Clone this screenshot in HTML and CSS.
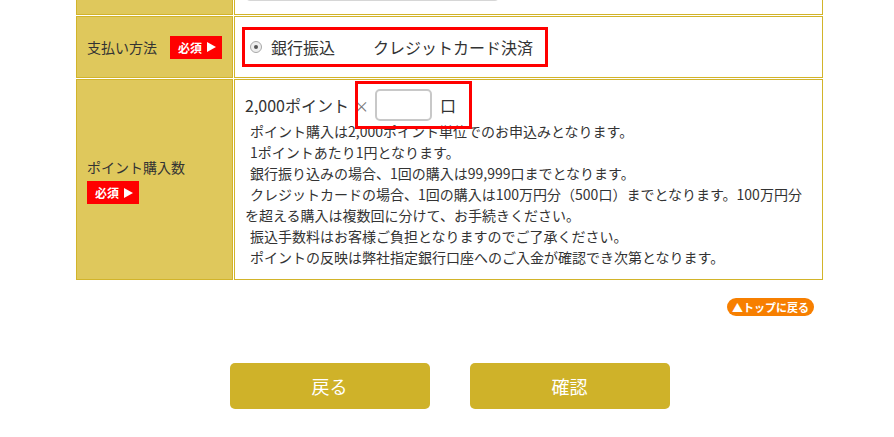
FILE: index.html
```html
<!DOCTYPE html>
<html lang="ja">
<head>
  <meta charset="UTF-8" />
  <meta name="viewport" content="width=device-width, initial-scale=1.0" />
  <title>ポイント購入</title>
  <link rel="stylesheet" href="styles.css">
</head>
<body>
  <div class="wrap">
    <table class="form">
      <tr class="row-top">
        <th></th>
        <td><input type="text" class="text" /></td>
      </tr>
      <tr class="row-pay">
        <th>
          <div class="th-line">
            <span>支払い方法</span>
            <span class="req">必須<i class="tri"></i></span>
          </div>
        </th>
        <td>
          <div class="mark-box">
            <label class="opt"><span class="radio"></span>銀行振込</label>
            <label class="opt">クレジットカード決済</label>
          </div>
        </td>
      </tr>
      <tr class="row-qty">
        <th>
          <div class="th-stack">
            <span>ポイント購入数</span>
            <span class="req">必須<i class="tri"></i></span>
          </div>
        </th>
        <td>
          <div class="qty">
            <span>2,000ポイント</span>
            <span class="times">×</span>
            <span class="qty-input">
              <input type="text" class="num" />
              <span class="unit">口</span>
              <span class="mark"></span>
            </span>
          </div>
          <div class="notes">
            <p>ポイント購入は2,000ポイント単位でのお申込みとなります。</p>
            <p>1ポイントあたり1円となります。</p>
            <p>銀行振り込みの場合、1回の購入は99,999口までとなります。</p>
            <p>クレジットカードの場合、1回の購入は100万円分（500口）までとなります。100万円分<br>を超える購入は複数回に分けて、お手続きください。</p>
            <p>振込手数料はお客様ご負担となりますのでご了承ください。</p>
            <p>ポイントの反映は弊社指定銀行口座へのご入金が確認でき次第となります。</p>
          </div>
        </td>
      </tr>
    </table>

    <div class="pagetop-row">
      <a class="pagetop" href="#">▲トップに戻る</a>
    </div>

    <div class="buttons">
      <button type="button" class="btn">戻る</button>
      <button type="submit" class="btn">確認</button>
    </div>
  </div>
</body>
</html>
```

FILE: styles.css
```css
body { margin: 0; background: #fff; color: #333; font-family: "Noto Sans CJK JP", "Noto Sans", sans-serif; }
.wrap { width: 749px; margin-left: 75px; }

.form { width: 749px; border-collapse: separate; border-spacing: 1px; margin-top: -37px; table-layout: fixed; }
.form th, .form td { border: 1px solid #d2b42a; vertical-align: middle; text-align: left; font-weight: normal; }
.form th { width: 135px; background: #dfc85c; padding: 0 10px; font-size: 14px; line-height: 20px; }
.form td { background: #fff; }

.row-top td { padding: 6px 10px 13px; }
.text { display: block; width: 255px; height: 30px; box-sizing: border-box; border: 1px solid #d6d6d6; border-radius: 5px; margin: 0; }

.th-line { display: flex; justify-content: space-between; align-items: center; }
.th-stack { display: flex; flex-direction: column; align-items: flex-start; gap: 4px; margin-top: 2px; }
.req { display: inline-flex; align-items: center; height: 23px; padding: 0 6px 0 8px; background: #f00; color: #fff; font-size: 12px; font-weight: bold; line-height: 23px; }
.tri { display: inline-block; width: 0; height: 0; margin-left: 5px; border-top: 5px solid transparent; border-bottom: 5px solid transparent; border-left: 9px solid #fff; }

.row-pay td { padding: 10px 7px; }
.mark-box { display: inline-flex; align-items: center; height: 34px; border: 3px solid #f00; padding: 0 12px 0 4px; font-size: 16px; }
.opt { display: inline-flex; align-items: center; }
.opt + .opt { margin-left: 38px; }
.radio { display: inline-block; width: 10px; height: 10px; border: 1px solid #a8a8a8; border-radius: 50%; background: #eee; margin: 0 9px 0 1px; position: relative; }
.radio::after { content: ""; position: absolute; left: 3px; top: 3px; width: 4px; height: 4px; border-radius: 50%; background: #555; }

.row-qty td { padding: 9px 10px 11px; }
.qty { display: flex; align-items: center; height: 32px; font-size: 16px; }
.times { color: #777; font-size: 15px; margin: 0 6px 0 5px; }
.qty-input { position: relative; display: inline-flex; align-items: center; }
.num { width: 57px; height: 32px; box-sizing: border-box; border: 2px solid #c8c8c8; border-radius: 5px; margin: 0 8px 0 0; }
.unit { font-size: 16px; }
.mark { position: absolute; left: -20px; right: -16px; top: -8px; bottom: -8px; border: 3px solid #f00; }

.notes { font-size: 14px; line-height: 21px; }
.notes p { margin: 0; text-indent: 5px; }

.pagetop-row { display: flex; justify-content: flex-end; margin-top: 17px; padding-right: 10px; }
.pagetop { display: inline-block; height: 18px; line-height: 18px; padding: 0 5px; border-radius: 9px; background: #f77f00; color: #fff; font-size: 11px; font-weight: bold; text-decoration: none; }

.buttons { display: flex; justify-content: center; gap: 40px; margin-top: 47px; }
.btn { width: 200px; height: 46px; border: none; border-radius: 5px; background: #cfb229; color: #fff; font-family: inherit; font-size: 18px; cursor: pointer; }
```
